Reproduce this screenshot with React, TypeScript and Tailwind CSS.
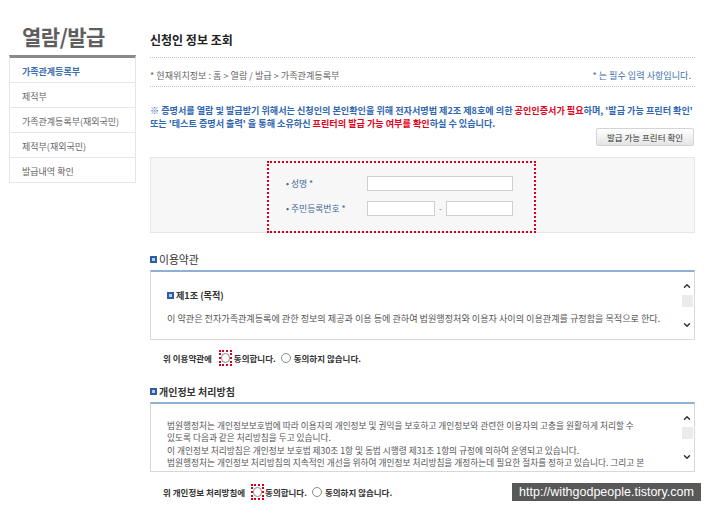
import { ChevronUp, ChevronDown } from 'lucide-react'

const font = "font-['Noto_Sans_CJK_KR','Liberation_Sans',sans-serif]"

const menu = ['가족관계등록부', '제적부', '가족관계등록부(재외국민)', '제적부(재외국민)', '발급내역 확인']

function Bullet() {
  return <span className="inline-block w-[7px] h-[7px] border-[2px] border-[#2c5ea8] bg-[#b9cde8] mr-[2px] shrink-0" />
}

function Radio() {
  return <span className="inline-block w-[10px] h-[10px] rounded-full border border-[#8a8a8a] bg-white" />
}

function ScrollBar() {
  return (
    <div className="w-[14px] shrink-0 flex flex-col items-center pt-[9px] pb-[9px] justify-between">
      <ChevronUp size={10} strokeWidth={3.5} className="text-[#333]" />
      <div className="w-[11px] h-[12px] bg-[#ebebeb] mt-[-10px]" />
      <ChevronDown size={10} strokeWidth={3.5} className="text-[#333]" />
    </div>
  )
}

export default function App() {
  return (
    <div className={`w-[720px] h-[514px] overflow-hidden bg-white relative flex ${font}`}>
      {/* Left menu */}
      <div className="w-[127px] ml-[9px] shrink-0 flex flex-col">
        <div className="h-[55px] pt-[24px] pl-[13px]">
          <h1 className="text-[21px] leading-[24px] font-bold text-[#5e5e5e] tracking-[-0.5px]">열람/발급</h1>
        </div>
        <ul className="border-t-[3px] border-[#8a8a8a] border-x border-x-[#e6e6e6]">
          {menu.map((m, i) => (
            <li
              key={m}
              className={`h-[25px] pt-[3px] pl-[12px] flex items-center border-b border-[#e6e6e6] text-[9px] ${i === 0 ? 'text-[#3d6fae] font-semibold' : 'text-[#666]'}`}
            >
              {m}
            </li>
          ))}
        </ul>
      </div>

      {/* Main */}
      <div className="w-[545px] ml-[14px] flex flex-col">
        <div className="h-[58px] pt-[32px] border-b border-dotted border-[#c4c4c4]">
          <h2 className="text-[12px] leading-[16px] font-bold text-[#222]">신청인 정보 조회</h2>
        </div>

        <div className="h-[29px] pt-[12px] flex justify-between text-[9.1px] leading-[10px] border-b border-dotted border-[#c4c4c4]">
          <span className="text-[#666]">* 현재위치정보 : 홈 &gt; 열람 / 발급 &gt; 가족관계등록부</span>
          <span className="text-[#3d6fae] pr-[4px]">* 는 필수 입력 사항입니다.</span>
        </div>

        <div className="pt-[17px] text-[9.1px] leading-[13px] text-[#2f66b0] font-semibold whitespace-nowrap">
          <p>
            ※ 증명서를 열람 및 발급받기 위해서는 신청인의 본인확인을 위해 전자서명법 제2조 제8호에 의한{' '}
            <span className="text-[#e3001b]">공인인증서가 필요</span>하며, '발급 가능 프린터 확인'
          </p>
          <p>
            또는 '테스트 증명서 출력' 을 통해 소유하신{' '}
            <span className="text-[#e3001b]">프린터의 발급 가능 여부를 확인</span>하실 수 있습니다.
          </p>
        </div>

        <div className="flex justify-end mt-[-2px] pr-[1px]">
          <button className="w-[98px] h-[18px] border border-[#d4d4d4] bg-gradient-to-b from-white to-[#e4e4e4] text-[8.5px] text-[#333] rounded-[2px]">
            발급 가능 프린터 확인
          </button>
        </div>

        {/* Form box */}
        <div className="mt-[11px] h-[76px] border border-[#e6e6e6] bg-[#f7f7f7] pt-[3px] pl-[116px]">
          <div className="w-[269px] h-[72px] border-2 border-dotted border-[#d7001e] pt-[13px] pl-[17px] flex flex-col gap-[10px] text-[8.8px] text-[#3f6595]">
            <div className="flex items-center h-[15px]">
              <span className="w-[81px]">• 성명 *</span>
              <span className="w-[146px] h-[15px] bg-white border border-[#cfcfcf]" />
            </div>
            <div className="flex items-center h-[15px]">
              <span className="w-[81px]">• 주민등록번호 *</span>
              <span className="w-[68px] h-[15px] bg-white border border-[#cfcfcf]" />
              <span className="w-[11px] text-center text-[#777]">-</span>
              <span className="w-[67px] h-[15px] bg-white border border-[#cfcfcf]" />
            </div>
          </div>
        </div>

        {/* Terms */}
        <div className="mt-[19px] h-[14px] flex items-center text-[10.8px] text-[#333]">
          <Bullet />
          <span>이용약관</span>
        </div>
        <div className="mt-[4px] h-[70px] border border-[#d8d8d8] border-t-2 border-t-[#8fb0d6] flex">
          <div className="flex-1 pl-[16px] pt-[17px] text-[9.1px] leading-[12px] whitespace-nowrap">
            <div className="flex items-center font-bold text-[#333]">
              <Bullet />
              <span>제1조 (목적)</span>
            </div>
            <p className="mt-[11px] text-[#555]">
              이 약관은 전자가족관계등록에 관한 정보의 제공과 이용 등에 관하여 법원행정처와 이용자 사이의 이용관계를 규정함을 목적으로 한다.
            </p>
          </div>
          <ScrollBar />
        </div>
        <div className="mt-[10px] h-[16px] pl-[13px] flex items-center text-[8.5px] text-[#333] font-semibold">
          <span>위 이용약관에</span>
          <span className="ml-[7px] w-[13px] h-[16px] border-2 border-dotted border-[#d7001e] flex items-center justify-center">
            <Radio />
          </span>
          <span className="ml-[2px]">동의합니다.</span>
          <span className="ml-[5px] mr-[3px] flex"><Radio /></span>
          <span>동의하지 않습니다.</span>
        </div>

        {/* Privacy */}
        <div className="mt-[18px] h-[14px] flex items-center text-[10px] font-bold text-[#333]">
          <Bullet />
          <span>개인정보 처리방침</span>
        </div>
        <div className="mt-[4px] h-[70px] border border-[#d8d8d8] border-t-2 border-t-[#8fb0d6] flex overflow-hidden">
          <div className="flex-1 pl-[16px] pt-[16px] text-[8.7px] leading-[12.4px] whitespace-nowrap text-[#555] overflow-hidden">
            <p>법원행정처는 개인정보보호법에 따라 이용자의 개인정보 및 권익을 보호하고 개인정보와 관련한 이용자의 고충을 원활하게 처리할 수</p>
            <p>있도록 다음과 같은 처리방침을 두고 있습니다.</p>
            <p>이 개인정보 처리방침은 개인정보 보호법 제30조 1항 및 동법 시행령 제31조 1항의 규정에 의하여 운영되고 있습니다.</p>
            <p>법원행정처는 개인정보 처리방침의 지속적인 개선을 위하여 개인정보 처리방침을 개정하는데 필요한 절차를 정하고 있습니다. 그리고 본</p>
          </div>
          <ScrollBar />
        </div>
        <div className="mt-[12px] h-[16px] pl-[13px] flex items-center text-[8.5px] text-[#333] font-semibold">
          <span>위 개인정보 처리방침에</span>
          <span className="ml-[6px] w-[13px] h-[16px] border-2 border-dotted border-[#d7001e] flex items-center justify-center">
            <Radio />
          </span>
          <span className="ml-[1px]">동의합니다.</span>
          <span className="ml-[5px] mr-[3px] flex"><Radio /></span>
          <span>동의하지 않습니다.</span>
        </div>
      </div>

      {/* Blog watermark */}
      <div className="absolute left-[512px] top-[483px] w-[189px] h-[18px] bg-[#585858] flex items-center justify-center text-white text-[12.5px] font-['Liberation_Sans',sans-serif]">
        http://withgodpeople.tistory.com
      </div>
    </div>
  )
}
